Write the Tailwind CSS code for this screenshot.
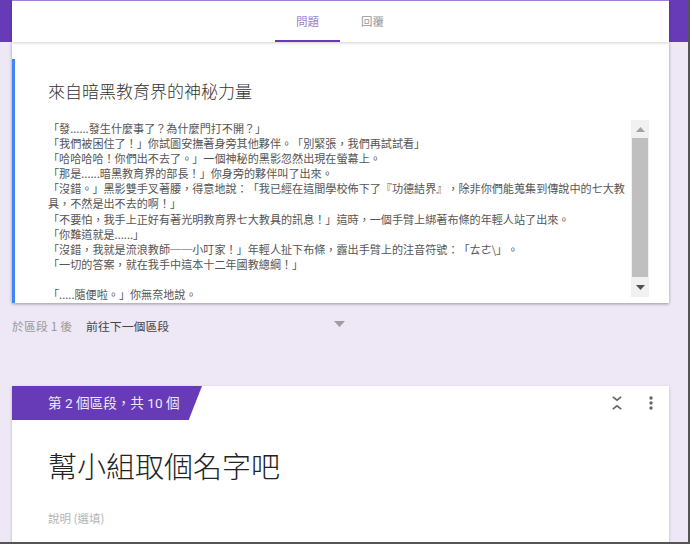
<!DOCTYPE html>
<html lang="zh-TW">
<head>
    <meta charset="UTF-8">
    <title>問題</title>
    <script src="https://cdn.jsdelivr.net/npm/@tailwindcss/browser@4"></script>
</head>
<body class="bg-white font-['Noto_Sans_CJK_TC','Roboto',sans-serif] [text-spacing-trim:space-all]">
    <div class="relative w-[690px] h-[544px] overflow-hidden bg-[#ede7f6] border-r-2 border-b-2 border-[#555]">
        <!-- purple band behind the tabs -->
        <div class="absolute top-0 left-0 w-full h-[42px] bg-[#673ab7]"></div>

        <div class="relative ml-[12px] w-[657px]">
            <!-- tabs -->
            <div class="relative z-10 flex justify-center h-[42px] bg-white border-t border-[#a37fdb] shadow-[0_1px_3px_rgba(0,0,0,0.18)] pr-[1px]">
                <div class="flex items-start justify-center w-[65px] h-[41px] pt-[12px] border-b-2 border-[#673ab7] text-[11.5px] leading-[16px] text-[#9b7fd6]">問題</div>
                <div class="flex items-start justify-center w-[65px] pt-[12px] text-[11.5px] leading-[16px] text-[#999]">回覆</div>
            </div>

            <!-- section 1 -->
            <div class="h-[261px] pt-[17px] bg-white shadow-[0_1px_3px_rgba(0,0,0,0.35)]">
                <div class="flex h-[244px] border-l-[3px] border-[#4285f4] pl-[33px]">
                    <div class="w-[584px] shrink-0">
                        <h1 class="pt-[20px] text-[17px] leading-[24px] font-light text-[#333]">來自暗黑教育界的神秘力量</h1>
                        <div class="h-[186px] mt-[18px] overflow-hidden text-[11.1px] leading-[15.1px] text-[#555]">
                            「發......發生什麼事了？為什麼門打不開？」<br>
                            「我們被困住了！」你試圖安撫著身旁其他夥伴。「別緊張，我們再試試看」<br>
                            「哈哈哈哈！你們出不去了。」一個神秘的黑影忽然出現在螢幕上。<br>
                            「那是......暗黑教育界的部長！」你身旁的夥伴叫了出來。<br>
                            「沒錯。」黑影雙手叉著腰，得意地說：「我已經在這間學校佈下了『功德結界』，除非你們能蒐集到傳說中的七大教<br>
                            具，不然是出不去的啊！」<br>
                            「不要怕，我手上正好有著光明教育界七大教具的訊息！」這時，一個手臂上綁著布條的年輕人站了出來。<br>
                            「你難道就是......」<br>
                            「沒錯，我就是流浪教師──小叮家！」年輕人扯下布條，露出手臂上的注音符號：「ㄊㄜ\」。<br>
                            「一切的答案，就在我手中這本十二年國教總綱！」<br>
                            <br>
                            「.....隨便啦。」你無奈地說。
                        </div>
                    </div>
                    <!-- scrollbar -->
                    <div class="flex flex-col w-[18px] h-[177px] mt-[61px] -ml-[1px] bg-[#f1f1f1]">
                        <div class="flex items-center justify-center h-[18px]">
                            <svg width="9" height="5" viewBox="0 0 9 5"><path d="M4.5 0L9 5H0z" fill="#a3a3a3"/></svg>
                        </div>
                        <div class="mx-[1px] h-[139px] bg-[#bfbfbf]"></div>
                        <div class="flex items-center justify-center h-[20px]">
                            <svg width="9" height="5" viewBox="0 0 9 5"><path d="M0 0H9L4.5 5z" fill="#505050"/></svg>
                        </div>
                    </div>
                </div>
            </div>

            <!-- after section -->
            <div class="flex items-center h-[46px] text-[11.9px] leading-[16px]">
                <span class="w-[74px] text-[#9a9a9a] shrink-0 tracking-[0.1px]">於區段 1 後</span>
                <span class="w-[248px] text-[#444] shrink-0">前往下一個區段</span>
                <svg class="mb-[5px]" width="11" height="6" viewBox="0 0 11 6"><path d="M0 0H11L5.5 6z" fill="#9e9e9e"/></svg>
            </div>

            <!-- section 2 -->
            <div class="mt-[37px] h-[160px] bg-white shadow-[0_1px_3px_rgba(0,0,0,0.2)]">
                <div class="flex justify-between items-start h-[34px]">
                    <div class="w-[190px] h-[34px] pl-[36px] bg-[#673ab7] [clip-path:polygon(0_0,100%_0,93%_100%,0_100%)] text-[13.6px] leading-[34px] text-[#f0e9fa] font-['Roboto','Noto_Sans_CJK_TC',sans-serif] whitespace-nowrap">第 2 個區段，共 10 個</div>
                    <div class="flex items-center gap-[27px] pt-[10px] pr-[16px]">
                        <svg width="10" height="14" viewBox="0 0 10 14" fill="none" stroke="#666" stroke-width="1.7"><path d="M.8 .8l4.2 3.4 4.2-3.4"/><path d="M.8 13.2l4.2-3.4 4.2 3.4"/></svg>
                        <svg width="4" height="14" viewBox="0 0 4 14" fill="#666"><circle cx="2" cy="2" r="1.7"/><circle cx="2" cy="7" r="1.7"/><circle cx="2" cy="12" r="1.7"/></svg>
                    </div>
                </div>
                <h2 class="pl-[36px] pt-[24px] text-[29px] leading-[42px] font-light text-[#222]">幫小組取個名字吧</h2>
                <p class="pl-[36px] pt-[24px] text-[11.5px] leading-[16px] text-[#b5b5b5]">說明 (選填)</p>
            </div>
        </div>
    </div>
</body>
</html>
